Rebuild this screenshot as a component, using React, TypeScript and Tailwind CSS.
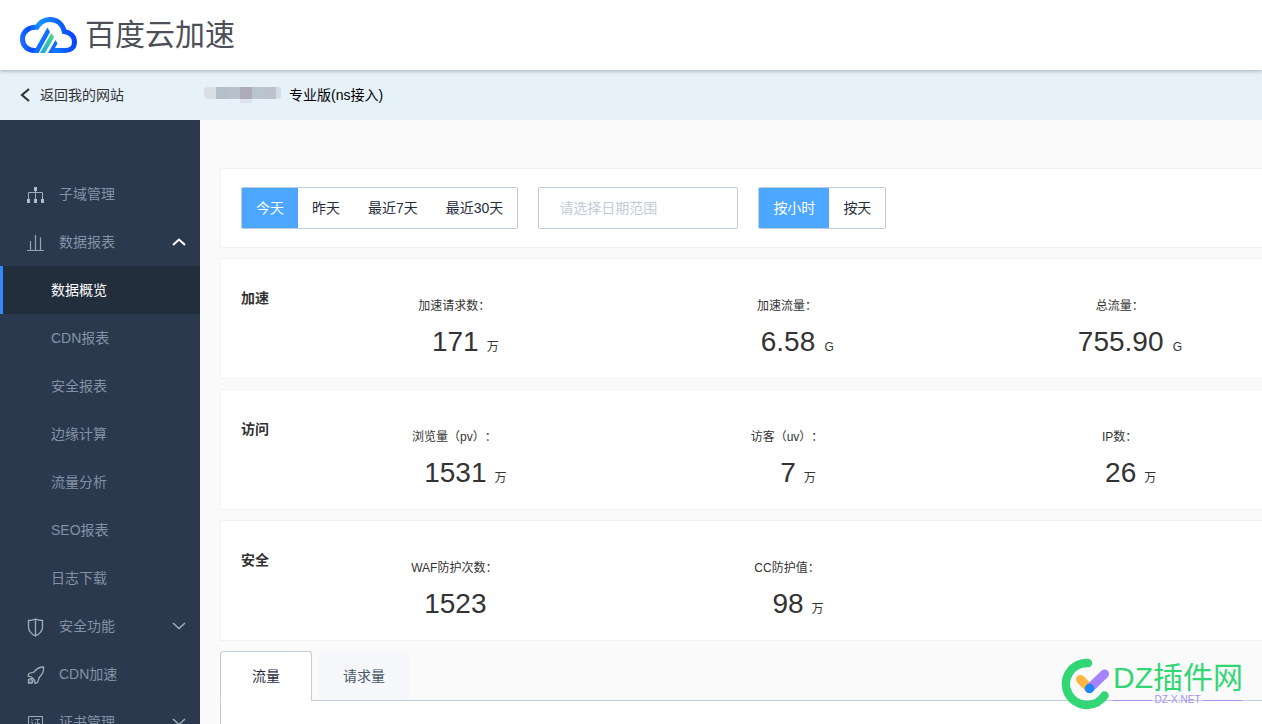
import React, { useState } from 'react';

type Metric = { label: string; value: string; unit?: string };
type Section = { title: string; metrics: Metric[] };

const sections: Section[] = [
    {
        title: '加速',
        metrics: [
            { label: '加速请求数：', value: '171', unit: '万' },
            { label: '加速流量：', value: '6.58', unit: 'G' },
            { label: '总流量：', value: '755.90', unit: 'G' },
        ],
    },
    {
        title: '访问',
        metrics: [
            { label: '浏览量（pv）：', value: '1531', unit: '万' },
            { label: '访客（uv）：', value: '7', unit: '万' },
            { label: 'IP数：', value: '26', unit: '万' },
        ],
    },
    {
        title: '安全',
        metrics: [
            { label: 'WAF防护次数：', value: '1523' },
            { label: 'CC防护值：', value: '98', unit: '万' },
        ],
    },
];

const reportPages = ['数据概览', 'CDN报表', '安全报表', '边缘计算', '流量分析', 'SEO报表', '日志下载'];

const CloudLogo = () => (
    <svg width="57" height="37" viewBox="0 0 57 37" fill="none" aria-hidden="true">
        <defs>
            <linearGradient id="cloud" x1="0" y1="30" x2="57" y2="20" gradientUnits="userSpaceOnUse">
                <stop offset="0" stopColor="#1a78ff" />
                <stop offset="0.2" stopColor="#0a4dff" />
                <stop offset="0.4" stopColor="#1596ff" />
                <stop offset="0.75" stopColor="#0b62ff" />
                <stop offset="1" stopColor="#0a3dff" />
            </linearGradient>
            <linearGradient id="ray" x1="32" y1="15" x2="22" y2="36" gradientUnits="userSpaceOnUse">
                <stop offset="0" stopColor="#45e07c" />
                <stop offset="1" stopColor="#1fa8e8" />
            </linearGradient>
        </defs>
        <path d="M17 10.3C8.500 9.500 2.500 15 2.500 22C2.500 29 8 33.500 14 33.500H17M16 12C19 6 24 2.500 30 2.500C37 2.500 42.500 7 44.200 14.500C50.500 15.500 54.500 19.500 54.500 25C54.500 30.500 50.500 33.500 45 33.500H31" stroke="url(#cloud)" strokeWidth="5" />
        <path d="M27.500 10.500L30 15L18.500 36H13Z" fill="#0f6fff" />
        <path d="M31.500 16L34 20.500L25 36H20Z" fill="url(#ray)" />
        <path d="M35.500 23L37.500 26.500L32 36H28Z" fill="#1169ff" />
    </svg>
);

const DomainIcon = () => (
    <svg width="17" height="17" viewBox="0 0 17 17" fill="none" stroke="#a3acb9" aria-hidden="true">
        <path d="M8.500 3V13M1.500 13V5.500H15.500V13" />
        <path d="M7 0h3v4H7zM0 12h3v4H0zM7 12h3v4H7zM14 12h3v4h-3z" fill="#b4bcc7" stroke="none" />
    </svg>
);

const ChartIcon = () => (
    <svg width="17" height="17" viewBox="0 0 17 17" fill="none" stroke="#98a3b1" strokeWidth="1.200" aria-hidden="true">
        <path d="M0 15.500H17M3.500 15V6M8.500 15V0M13.500 15V2.500" />
    </svg>
);

const ShieldIcon = () => (
    <svg width="17" height="19" viewBox="0 0 17 19" fill="none" stroke="#a3acb9" strokeWidth="1.300" aria-hidden="true">
        <path d="M1.500 2.500C4 2.500 6.500 2 8.500 1C10.500 2 13 2.500 15.500 2.500V9C15.500 13 12.500 16 8.500 18C4.500 16 1.500 13 1.500 9ZM8.500 1V18" />
    </svg>
);

const RocketIcon = () => (
    <svg width="18" height="18" viewBox="0 0 18 18" fill="none" stroke="#a3acb9" strokeWidth="1.300" aria-hidden="true">
        <path d="M16.500 1C12 1 9.500 2.500 7 6L2 7.500L1 10L4.500 11L7.500 14L8 17.500L10.500 16.500L12.500 11C15.500 8.500 17 5.500 16.500 1Z" />
        <path d="M4 12.500L1.500 13.500V17H5L6 15Z" fill="#a3acb9" fillOpacity="0.400" />
    </svg>
);

const CertIcon = () => (
    <svg width="17" height="17" viewBox="0 0 17 17" fill="none" stroke="#a3acb9" aria-hidden="true">
        <path d="M1.500 1.500H15.500V15.500H1.500Z" />
        <path d="M4 4.500L5.500 5.500M4 7.500H5.500V12L7 11M7.500 4.500H13M10.500 4.500V12M8.500 7.500V12M10.500 8.500H13M7 12.500H13.500" strokeWidth="0.800" />
    </svg>
);

const Chevron: React.FC<{ open?: boolean }> = ({ open }) => (
    <svg className="ml-auto" width="14" height="8" viewBox="0 0 14 8" fill="none" stroke={open ? '#ffffff' : '#a3acb9'} strokeWidth={open ? 2 : 1.500} aria-hidden="true">
        <path d={open ? 'M1 7L7 1.500L13 7' : 'M1 1L7 6.500L13 1'} />
    </svg>
);

const NavItem: React.FC<{ icon: React.ReactNode; label: string; open?: boolean; expandable?: boolean }> = ({ icon, label, open, expandable }) => (
    <button type="button" aria-expanded={expandable ? !!open : undefined} className="flex h-12 w-full shrink-0 items-center pr-3.5 pl-[27px] text-left text-sm text-[#8492a6]">
        <span className="flex w-8 shrink-0 pt-0.5">{icon}</span>
        {label}
        {expandable && <Chevron open={open} />}
    </button>
);

const Segmented: React.FC<{ options: string[]; label: string }> = ({ options, label }) => {
    const [selected, setSelected] = useState(options[0]);
    return (
        <div role="group" aria-label={label} className="flex h-[42px] rounded-xs border border-[#c0ccda]">
            {options.map(option => (
                <button
                    key={option}
                    type="button"
                    aria-pressed={option === selected}
                    onClick={() => setSelected(option)}
                    className={`px-3.5 text-sm whitespace-nowrap ${option === selected ? 'bg-[#4da6ff] text-white' : 'text-[#1f2d3d]'}`}
                >
                    {option}
                </button>
            ))}
        </div>
    );
};

const MetricSection: React.FC<{ section: Section }> = ({ section }) => (
    <section className="flex h-[121px] border border-[#f2f2f2] bg-white px-5">
        <h2 className="w-[47px] shrink-0 pt-[29px] text-sm font-bold text-[#333]">{section.title}</h2>
        <dl className="grid flex-1 grid-cols-3 text-center text-[#333]">
            {section.metrics.map(metric => (
                <div key={metric.label} className="pt-[39px]">
                    <dt className="text-xs [text-spacing-trim:space-all]">{metric.label}</dt>
                    <dd className="mt-2.5 flex items-baseline justify-center pl-7 text-[28px] leading-9">
                        {metric.value}
                        <span className="ml-0.5 w-6 text-xs">{metric.unit}</span>
                    </dd>
                </div>
            ))}
        </dl>
    </section>
);

const Watermark = () => (
    <div className="pointer-events-none absolute right-5 bottom-3.5 flex">
        <svg width="52" height="52" viewBox="0 0 52 52" fill="none" strokeLinecap="round" aria-hidden="true">
            <path d="M27 5A21 21 0 1 0 43.500 37.500" stroke="#33d675" strokeWidth="8.500" />
            <path d="M19.500 21.500L28 30" stroke="#ffb640" strokeWidth="9" />
            <path d="M28.500 30.500L43.500 16" stroke="#a682ff" strokeWidth="9" />
            <circle cx="28.500" cy="30.500" r="4.700" fill="#1788ff" />
        </svg>
        <div className="w-[129px] pt-0.5">
            <div className="text-[30px] leading-9 whitespace-nowrap text-[#33d675]">DZ插件网</div>
            <div className="flex items-center gap-0.5 text-[10px] leading-2 text-[#a993ee]">
                <span className="h-px flex-1 bg-[#a993ee]" />
                DZ-X.NET
                <span className="h-px flex-1 bg-[#a993ee]" />
            </div>
        </div>
    </div>
);

export default function App() {
    const [page, setPage] = useState('数据概览');
    const [tab, setTab] = useState('流量');

    return (
        <div className="relative flex h-screen flex-col overflow-hidden bg-[#fafafa] font-['Liberation_Sans','Noto_Sans_CJK_SC',sans-serif]">
            <header className="relative z-10 flex h-[70px] shrink-0 items-center bg-white px-5 shadow-[0_1px_4px_rgba(0,0,0,0.3)]">
                <CloudLogo />
                <span className="ml-2 pb-0.5 text-[30px] text-[#4c4f57]">百度云加速</span>
            </header>
            <div className="flex h-[50px] shrink-0 items-center bg-[#e6f1fa] text-sm">
                <a href="#sites" className="flex w-[204px] items-center pl-5 text-[#333]">
                    <svg className="mr-2.5" width="10" height="14" viewBox="0 0 10 14" fill="none" stroke="#333" strokeWidth="2.200" aria-hidden="true">
                        <path d="M9 1L2 7L9 13" />
                    </svg>
                    返回我的网站
                </a>
                <svg className="mr-2" width="77" height="16" viewBox="0 0 77 16" aria-hidden="true">
                    <path d="M4 0H12V12H4Q0 12 0 8V4Q0 0 4 0Z" fill="#dadfe6" />
                    <path d="M12 0H24V12H12Z" fill="#b5bfc9" />
                    <path d="M24 0H36V12H24Z" fill="#b8c1cc" />
                    <path d="M36 0H48V12H36Z" fill="#b0abba" />
                    <path d="M48 0H60V12H48Z" fill="#b8c5cf" />
                    <path d="M60 0H72V12H60Z" fill="#bbc1cd" />
                    <path d="M72 0H74Q77 0 77 4V8Q77 12 74 12H72Z" fill="#d3dce6" />
                    <path d="M36 12H48V16H36Z" fill="#dbe4ee" />
                </svg>
                <span className="text-black">专业版(ns接入)</span>
            </div>
            <div className="flex min-h-0 flex-1">
                <nav className="flex w-[200px] shrink-0 flex-col overflow-hidden bg-[#2a394d] pt-[50px]">
                    <NavItem icon={<DomainIcon />} label="子域管理" />
                    <NavItem icon={<ChartIcon />} label="数据报表" expandable open />
                    {reportPages.map(name => (
                        <button
                            key={name}
                            type="button"
                            onClick={() => setPage(name)}
                            className={`h-12 shrink-0 border-l-3 pl-12 text-left text-sm ${name === page ? 'border-[#3388ff] bg-[#232e3c] text-white' : 'border-transparent text-[#8492a6]'}`}
                        >
                            {name}
                        </button>
                    ))}
                    <NavItem icon={<ShieldIcon />} label="安全功能" expandable />
                    <NavItem icon={<RocketIcon />} label="CDN加速" />
                    <NavItem icon={<CertIcon />} label="证书管理" expandable />
                </nav>
                <main className="min-w-0 flex-1 overflow-hidden pt-12 pl-5">
                    <div className="flex min-w-[1087px] flex-col gap-2.5">
                        <div className="flex h-20 items-center gap-5 border border-[#f2f2f2] bg-white px-5">
                            <Segmented label="时间" options={['今天', '昨天', '最近7天', '最近30天']} />
                            <input
                                type="text"
                                aria-label="日期范围"
                                placeholder="请选择日期范围"
                                className="h-[42px] w-[200px] rounded-xs border border-[#c0ccda] px-5 text-sm placeholder:text-[#c0ccda]"
                            />
                            <Segmented label="粒度" options={['按小时', '按天']} />
                        </div>
                        {sections.map(section => (
                            <MetricSection key={section.title} section={section} />
                        ))}
                        <div>
                            <div role="tablist" className="flex items-start gap-1.5">
                                {['流量', '请求量'].map(name => (
                                    <button
                                        key={name}
                                        type="button"
                                        role="tab"
                                        aria-selected={name === tab}
                                        onClick={() => setTab(name)}
                                        className={`w-[92px] rounded-t border text-sm ${name === tab ? 'relative -mb-px h-[50px] border-[#c0ccda] border-b-white bg-white text-[#1f2d3d]' : 'h-[49px] border-transparent bg-[#f5f7fb] text-[#475669]'}`}
                                    >
                                        {name}
                                    </button>
                                ))}
                            </div>
                            <div role="tabpanel" className="h-96 border border-[#c0ccda] bg-white" />
                        </div>
                    </div>
                </main>
            </div>
            <Watermark />
        </div>
    );
}
